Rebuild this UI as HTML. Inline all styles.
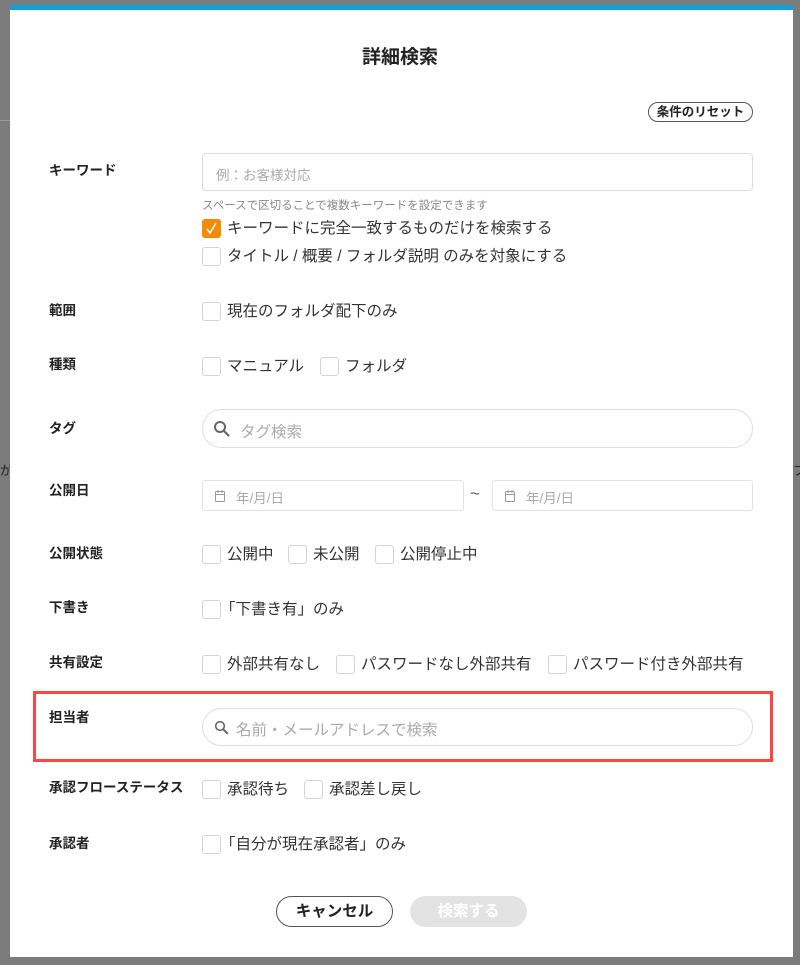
<!DOCTYPE html>
<html><head><meta charset="utf-8"><style>
*{margin:0;padding:0;box-sizing:border-box}
body{width:800px;height:965px;background:#7b7b7b;position:relative;overflow:hidden;font-family:"Liberation Sans","Noto Sans CJK JP",sans-serif;color:#222}
.modal{position:absolute;left:10px;top:5px;width:783px;height:952px;background:#fff;border-top:5px solid #13a0dc}
.a{position:absolute}
.lbl{position:absolute;left:49px;font-size:13.5px;font-weight:bold;line-height:16px}
.cb{position:absolute;width:19px;height:19px;border:1px solid #d4d4d4;border-radius:3px;background:#fff}
.ct{position:absolute;font-size:15.5px;line-height:19px;color:#333;white-space:nowrap}
.inp{position:absolute;left:202px;width:551px;border:1px solid #ddd;background:#fff}
.ph{color:#aaa;font-size:14px}
</style></head><body>
<div class="a" style="left:0;top:120px;width:10px;height:1px;background:#999"></div>
<div class="a" style="left:0;top:460px;font-size:13px;color:#222">が</div>
<div class="a" style="left:793px;top:460px;font-size:13px;color:#222">ブ</div>
<div class="modal"></div>
<div class="a" style="left:0;top:47px;width:800px;text-align:center;font-size:19px;font-weight:bold;line-height:22px">詳細検索</div>
<div class="a" style="left:648px;top:102px;width:105px;height:20px;border:1px solid #555;border-radius:10px;font-size:12.5px;font-weight:bold;text-align:center;line-height:18px">条件のリセット</div>

<div class="lbl" style="top:163px">キーワード</div>
<div class="inp" style="top:153px;height:38px;border-radius:4px"><span class="ph a" style="left:13px;top:10px;font-size:13.5px">例：お客様対応</span></div>
<div class="a" style="left:202px;top:197px;font-size:11.5px;color:#888">スペースで区切ることで複数キーワードを設定できます</div>
<div class="cb" style="left:202px;top:219px;background:#f58a07;border-color:#f58a07"><svg width="17" height="17" viewBox="0 0 17 17"><path d="M4 9l3 4 6-10" stroke="#fff" stroke-width="1.5" fill="none"/></svg></div>
<div class="ct" style="left:227px;top:219px">キーワードに完全一致するものだけを検索する</div>
<div class="cb" style="left:202px;top:247px"></div>
<div class="ct" style="left:227px;top:247px">タイトル / 概要 / フォルダ説明 のみを対象にする</div>

<div class="lbl" style="top:303px">範囲</div>
<div class="cb" style="left:202px;top:302px"></div><div class="ct" style="left:227px;top:302px">現在のフォルダ配下のみ</div>

<div class="lbl" style="top:357px">種類</div>
<div class="cb" style="left:202px;top:357px"></div><div class="ct" style="left:227px;top:357px">マニュアル</div>
<div class="cb" style="left:320px;top:357px"></div><div class="ct" style="left:345px;top:357px">フォルダ</div>

<div class="lbl" style="top:421px">タグ</div>
<div class="inp" style="top:409px;height:39px;border-radius:20px">
<svg class="a" style="left:10px;top:10px" width="18" height="18" viewBox="0 0 18 18"><circle cx="7" cy="7" r="5" stroke="#666" stroke-width="2" fill="none"/><path d="M11 11l5 5" stroke="#666" stroke-width="2.2"/></svg>
<span class="ph a" style="left:37px;top:10px;font-size:15.5px">タグ検索</span></div>

<div class="lbl" style="top:483px">公開日</div>
<div class="a" style="left:202px;top:480px;width:262px;height:31px;border:1px solid #e2e2e2;border-radius:3px"><svg class="a" style="left:12px;top:9px" width="10" height="12" viewBox="0 0 10 12"><rect x="0.5" y="1.5" width="9" height="10" rx="1" fill="none" stroke="#999"/><path d="M0.5 4.5h9M3 0v3M7 0v3" stroke="#999"/></svg><span class="a ph" style="left:33px;top:6px;font-size:13.5px">年/月/日</span></div>
<div class="a" style="left:470px;top:484px;font-size:17px;color:#555">~</div>
<div class="a" style="left:492px;top:480px;width:261px;height:31px;border:1px solid #e2e2e2;border-radius:3px"><svg class="a" style="left:12px;top:9px" width="10" height="12" viewBox="0 0 10 12"><rect x="0.5" y="1.5" width="9" height="10" rx="1" fill="none" stroke="#999"/><path d="M0.5 4.5h9M3 0v3M7 0v3" stroke="#999"/></svg><span class="a ph" style="left:33px;top:6px;font-size:13.5px">年/月/日</span></div>

<div class="lbl" style="top:546px">公開状態</div>
<div class="cb" style="left:202px;top:545px"></div><div class="ct" style="left:227px;top:545px">公開中</div>
<div class="cb" style="left:288px;top:545px"></div><div class="ct" style="left:313px;top:545px">未公開</div>
<div class="cb" style="left:375px;top:545px"></div><div class="ct" style="left:400px;top:545px">公開停止中</div>

<div class="lbl" style="top:600px">下書き</div>
<div class="cb" style="left:202px;top:600px"></div><div class="ct" style="left:220px;top:600px">「下書き有」のみ</div>

<div class="lbl" style="top:655px">共有設定</div>
<div class="cb" style="left:202px;top:655px"></div><div class="ct" style="left:227px;top:655px">外部共有なし</div>
<div class="cb" style="left:336px;top:655px"></div><div class="ct" style="left:361px;top:655px">パスワードなし外部共有</div>
<div class="cb" style="left:548px;top:655px"></div><div class="ct" style="left:573px;top:655px">パスワード付き外部共有</div>

<div class="a" style="left:33px;top:691px;width:740px;height:71px;border:3px solid #f44"></div>
<div class="lbl" style="top:710px">担当者</div>
<div class="inp" style="top:708px;height:38px;border-radius:19px">
<svg class="a" style="left:11px;top:11px" width="16" height="16" viewBox="0 0 16 16"><circle cx="6" cy="6" r="4.3" stroke="#666" stroke-width="1.6" fill="none"/><path d="M9.3 9.3l4.5 4.5" stroke="#666" stroke-width="2"/></svg>
<span class="ph a" style="left:33px;top:9px;font-size:15.5px">名前・メールアドレスで検索</span></div>

<div class="lbl" style="top:780px">承認フローステータス</div>
<div class="cb" style="left:202px;top:780px"></div><div class="ct" style="left:227px;top:780px">承認待ち</div>
<div class="cb" style="left:304px;top:780px"></div><div class="ct" style="left:329px;top:780px">承認差し戻し</div>

<div class="lbl" style="top:836px">承認者</div>
<div class="cb" style="left:202px;top:835px"></div><div class="ct" style="left:220px;top:835px">「自分が現在承認者」のみ</div>

<div class="a" style="left:276px;top:896px;width:117px;height:31px;border:1px solid #555;border-radius:16px;text-align:center;font-size:15.5px;font-weight:bold;line-height:29px">キャンセル</div>
<div class="a" style="left:410px;top:896px;width:117px;height:31px;background:#e3e3e3;border-radius:16px;text-align:center;font-size:15.5px;font-weight:bold;line-height:31px;color:#fff">検索する</div>
</body></html>
